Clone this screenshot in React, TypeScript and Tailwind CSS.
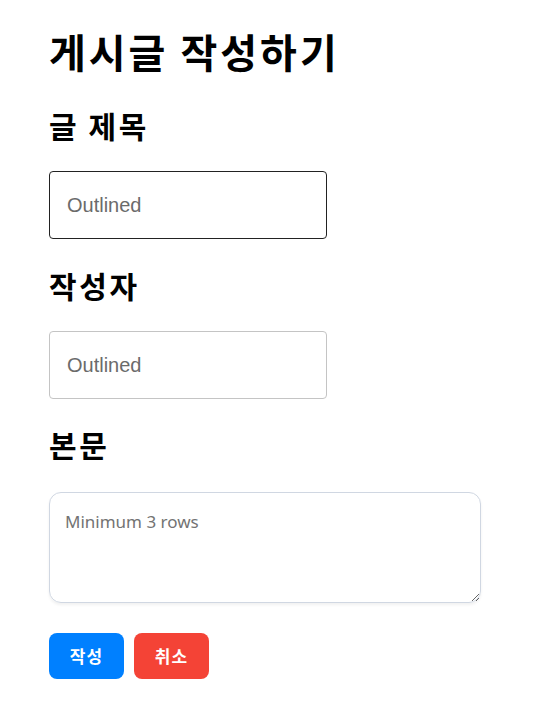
export default function App() {
  const ko = { fontFamily: '"Noto Sans CJK KR", sans-serif' };

  return (
    <div className="min-h-screen bg-white px-[49px] pt-[22px] text-black" style={ko}>
      <h1 className="-mt-[1px] text-[40px] font-bold leading-[60px] tracking-[3px]">게시글 작성하기</h1>

      <h2 className="mt-[22px] text-[30px] font-bold leading-[44px] tracking-[2.6px]">글 제목</h2>
      <input
        placeholder="Outlined"
        className="mt-[24px] block h-[68px] w-[278px] rounded-[4px] border border-[#222] px-[17px] text-[20px] outline-none placeholder:text-[#6b6b6b]"
        style={{ fontFamily: '"Liberation Sans", Arial, sans-serif' }}
      />

      <h2 className="mt-[24px] text-[30px] font-bold leading-[44px] tracking-[2.6px]">작성자</h2>
      <input
        placeholder="Outlined"
        className="mt-[24px] block h-[68px] w-[278px] rounded-[4px] border border-[#c4c4c4] px-[17px] text-[20px] outline-none placeholder:text-[#6b6b6b]"
        style={{ fontFamily: '"Liberation Sans", Arial, sans-serif' }}
      />

      <h2 className="mt-[23px] text-[30px] font-bold leading-[44px] tracking-[2.6px]">본문</h2>
      <textarea
        rows={3}
        placeholder="Minimum 3 rows"
        className="mt-[26px] block h-[111px] w-[432px] rounded-[12px] border border-[#d0d7e2] px-[15px] pt-[16px] text-[17px] shadow-[0_2px_3px_rgba(0,0,0,0.06)] outline-none placeholder:text-[#737373]"
        style={{ fontFamily: '"Noto Sans", sans-serif' }}
      />

      <div className="mt-[30px] flex gap-[10px]">
        <button className="h-[46px] w-[75px] rounded-[8px] bg-[#0080ff] text-[17px] font-bold tracking-[1px] text-white">작성</button>
        <button className="h-[46px] w-[75px] rounded-[8px] bg-[#f44336] text-[17px] font-bold tracking-[1px] text-white">취소</button>
      </div>
    </div>
  );
}
